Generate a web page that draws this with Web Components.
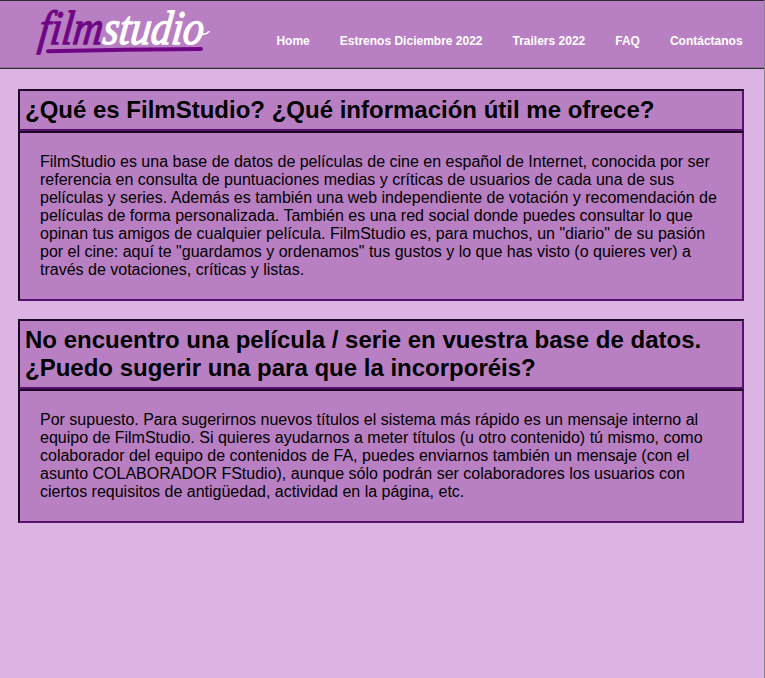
<!DOCTYPE html>
<html lang="es">
<head>
<meta charset="utf-8">
<title>FilmStudio - FAQ</title>
<style>
html,body{margin:0;height:100%}
body{font-family:"Liberation Sans",Arial,sans-serif;background:#dbb4e3;color:#000;overflow:hidden}
</style>
</head>
<body>
<film-page>
  <site-header slot="header">
    <nav-link>Home</nav-link>
    <nav-link>Estrenos Diciembre 2022</nav-link>
    <nav-link>Trailers 2022</nav-link>
    <nav-link>FAQ</nav-link>
    <nav-link>Contáctanos</nav-link>
  </site-header>
  <faq-item>
    <span slot="question">¿Qué es FilmStudio? ¿Qué información útil me ofrece?</span>
    FilmStudio es una base de datos de películas de cine en español de Internet, conocida por ser referencia en consulta de puntuaciones medias y críticas de usuarios de cada una de sus películas y series. Además es también una web independiente de votación y recomendación de películas de forma personalizada. También es una red social donde puedes consultar lo que opinan tus amigos de cualquier película. FilmStudio es, para muchos, un "diario" de su pasión por el cine: aquí te "guardamos y ordenamos" tus gustos y lo que has visto (o quieres ver) a través de votaciones, críticas y listas.
  </faq-item>
  <faq-item>
    <span slot="question">No encuentro una película / serie en vuestra base de datos. ¿Puedo sugerir una para que la incorporéis?</span>
    Por supuesto. Para sugerirnos nuevos títulos el sistema más rápido es un mensaje interno al equipo de FilmStudio. Si quieres ayudarnos a meter títulos (u otro contenido) tú mismo, como colaborador del equipo de contenidos de FA, puedes enviarnos también un mensaje (con el asunto COLABORADOR FStudio), aunque sólo podrán ser colaboradores los usuarios con ciertos requisitos de antigüedad, actividad en la página, etc.
  </faq-item>
</film-page>
<script>
const define = (name, markup) => customElements.define(name, class extends HTMLElement {
  constructor() {
    super();
    this.attachShadow({mode: 'open'}).innerHTML = markup;
  }
});

define('film-logo', `
<style>
:host{display:block;width:180px;height:56px}
svg{display:block;overflow:visible}
text{font:italic 48px "Liberation Serif","Times New Roman",serif;stroke-width:1.3;stroke-linejoin:round}
.film{fill:#6f0784;stroke:#6f0784}
.studio{fill:#fff;stroke:#fff}
</style>
<svg width="180" height="56" viewBox="32 6 180 56">
  <path d="M48 51.2 Q125 49.2 201 49" fill="none" stroke="#6f0784" stroke-width="4" stroke-linecap="round"/>
  <g transform="translate(37.5 44.3) skewX(-7)">
    <text textLength="165" lengthAdjust="spacingAndGlyphs"><tspan class="film">film</tspan><tspan class="studio">studio</tspan></text>
  </g>
  <path d="M202 34 Q206 35 209 31.5" fill="none" stroke="#fff" stroke-width="1.5" stroke-linecap="round"/>
</svg>`);

define('nav-link', `
<style>:host{display:block;font-size:12px;font-weight:bold;line-height:14px;color:#fff;white-space:nowrap}</style>
<slot></slot>`);

define('site-header', `
<style>
:host{display:flex;justify-content:space-between;box-sizing:border-box;height:69px;padding:5px 21.4px 0 32px;
  background:#b97fc3;border-top:1px solid #2d2930;border-bottom:1px solid #2d2930;box-shadow:inset 0 -1px #8d7193}
nav{display:flex;gap:30px;padding-top:28px}
</style>
<film-logo></film-logo><nav><slot></slot></nav>`);

define('faq-item', `
<style>
:host{display:block}
h2,p{margin:0;background:#b97fc3;border:2px solid;border-color:#1d0526 #58106f #58106f #1d0526}
h2{font-size:24px;line-height:28px;padding:5px}
p{font-size:16px;line-height:18px;padding:20px}
</style>
<h2><slot name="question"></slot></h2><p><slot></slot></p>`);

define('film-page', `
<style>
:host{display:block;box-sizing:border-box;height:678px;border-right:1px solid #858087}
main{display:flex;flex-direction:column;gap:18px;padding:20px 20px 0 18px}
</style>
<slot name="header"></slot><main><slot></slot></main>`);
</script>
</body>
</html>
